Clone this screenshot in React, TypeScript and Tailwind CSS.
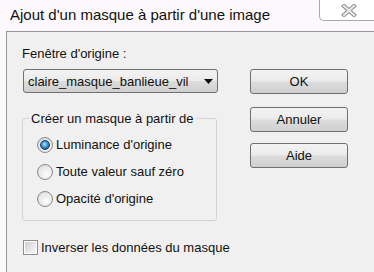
import React from "react";

const options = ["Luminance d'origine", "Toute valeur sauf zéro", "Opacité d'origine"];

function Radio({ checked }: { checked?: boolean }) {
  return (
    <span className="flex h-[16px] w-[16px] shrink-0 items-center justify-center rounded-full border border-[#8a8a8a] bg-[radial-gradient(circle_at_60%_65%,#fdfdfd_0%,#e9e9e9_55%,#d2d2d2_100%)]">
      {checked && (
        <span className="h-[10px] w-[10px] rounded-full border border-[#183a63] bg-[radial-gradient(circle_at_45%_40%,#b5e6ff_0%,#3d93d6_45%,#0f3866_100%)]" />
      )}
    </span>
  );
}

function Button({ children, className = "" }: { children: React.ReactNode; className?: string }) {
  return (
    <div
      className={
        "flex h-[25px] w-[98px] items-center justify-center rounded-[3px] border border-[#707070] bg-[linear-gradient(#f3f3f3_0%,#ebebeb_49%,#dddddd_51%,#cfcfcf_100%)] text-[13px] leading-[15px] " +
        className
      }
    >
      {children}
    </div>
  );
}

export default function App() {
  return (
    <div className="flex h-[272px] w-[374px] flex-col overflow-hidden bg-[#fcf8fc] font-['Liberation_Sans',Arial,sans-serif] text-[#111]">
      {/* title bar */}
      <div className="flex h-[31px] shrink-0 items-start justify-between">
        <div className="pl-[10px] pt-[6px] text-[15px] leading-[17px]">Ajout d'un masque à partir d'une image</div>
        <div className="flex h-[21px] w-[55px] items-center justify-center rounded-bl-[5px] border-b border-l border-[#a9a9a9] bg-white pl-[3px]">
          <svg width="16" height="13" viewBox="0 0 16 13">
            <path d="M3 2 L13 11 M13 2 L3 11" stroke="#8d8d8d" strokeWidth="4" strokeLinecap="square" fill="none" />
            <path d="M3 2 L13 11 M13 2 L3 11" stroke="#eeeeee" strokeWidth="2" strokeLinecap="square" fill="none" />
          </svg>
        </div>
      </div>

      {/* dialog body */}
      <div className="ml-[6px] flex flex-1 border-l border-t border-[#979797] bg-[#f0f0f0] pl-[15px] pt-[14px] text-[13px] leading-[15px]">
        <div className="flex w-[196px] shrink-0 flex-col">
          <div>Fenêtre d'origine :</div>
          <div className="ml-[1px] mt-[8px] flex h-[24px] w-[195px] items-center justify-between rounded-[3px] border border-[#707070] bg-[linear-gradient(#f3f3f3_0%,#ebebeb_49%,#dddddd_51%,#cfcfcf_100%)] pl-[4px] pr-[4px]">
            <span>claire_masque_banlieue_vil</span>
            <svg width="9" height="5" viewBox="0 0 9 5">
              <path d="M0 0 H9 L4.5 5 Z" fill="#111" />
            </svg>
          </div>

          <fieldset className="mt-[18px] w-[195px] rounded-[3px] border border-[#d3d3d3] pb-[8px]">
            <legend className="ml-[6px] px-[2px] leading-[15px]">Créer un masque à partir de</legend>
            <div className="mt-[5px] flex flex-col pl-[14px]">
              {options.map((o, i) => (
                <div key={o} className="flex h-[27px] items-center gap-[3px]">
                  <Radio checked={i === 0} />
                  <span className="whitespace-nowrap">{o}</span>
                </div>
              ))}
            </div>
          </fieldset>

          <div className="ml-[1px] mt-[19px] flex items-center gap-[3px] whitespace-nowrap">
            <span className="flex h-[15px] w-[15px] shrink-0 items-center justify-center border border-[#8e8f8f] bg-white">
              <span className="h-[11px] w-[11px] bg-[linear-gradient(135deg,#c9ccd1_0%,#e6e6e6_50%,#f7f7f7_100%)]" />
            </span>
            <span>Inverser les données du masque</span>
          </div>
        </div>

        <div className="ml-[32px] flex flex-col pt-[23px]">
          <Button>OK</Button>
          <Button className="mt-[13px]">Annuler</Button>
          <Button className="mt-[11px]">Aide</Button>
        </div>
      </div>
    </div>
  );
}
